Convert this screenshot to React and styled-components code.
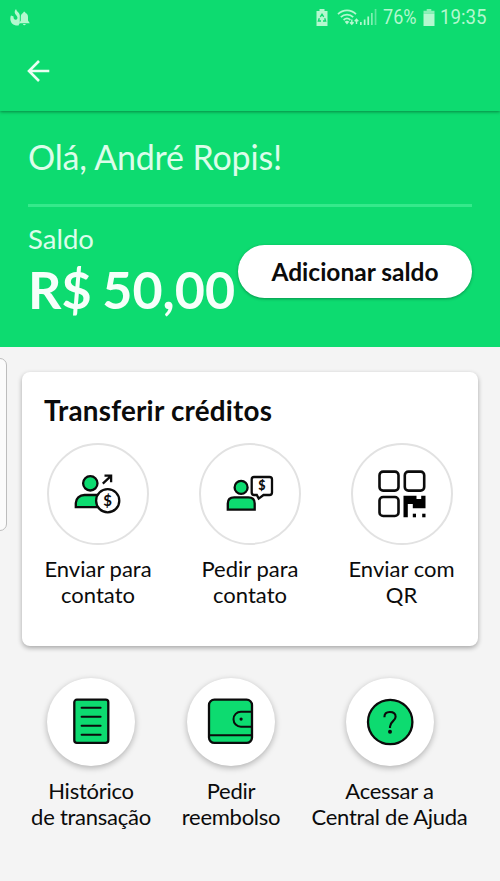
import React from 'react';
import styled, { createGlobalStyle } from 'styled-components';

const GREEN = '#0ddb70';

const GlobalStyle = createGlobalStyle`
  * {
    box-sizing: border-box;
  }

  body {
    margin: 0;
    background-color: #f4f4f4;
  }
`;

// Styled Components
const Screen = styled.div`
  position: relative;
  display: flex;
  flex-direction: column;
  width: 500px;
  height: 881px;
  overflow: hidden;
  background-color: #f4f4f4;
  color: #0b0b0b;
  font-family: Lato, 'Open Sans', sans-serif;
`;

const TopArea = styled.header`
  position: relative;
  flex: none;
  height: 111px;
  background-color: ${GREEN};
  box-shadow: 0 1px 3px rgba(0, 70, 30, 0.55);
`;

const StatusBar = styled.div`
  display: flex;
  align-items: center;
  justify-content: space-between;
  height: 34px;
  padding: 0 13px 0 10px;
  color: #b4f8cf;
`;

const StatusGroup = styled.div`
  display: flex;
  align-items: center;
`;

const StatusItem = styled.div`
  display: flex;
  margin-left: ${props => props.$gap || 0}px;
`;

const StatusText = styled.span`
  width: ${props => props.$width}px;
  font-family: Roboto, sans-serif;
  font-size: 21px;
  line-height: 24px;
  white-space: nowrap;

  span {
    display: inline-block;
    transform: scaleX(${props => props.$squeeze});
    transform-origin: left center;
  }
`;

const BackButton = styled.button`
  display: flex;
  margin: 25px 0 0 26px;
  padding: 0;
  border: 0;
  background: none;
  color: #e9fff2;
`;

const Hero = styled.section`
  flex: none;
  height: 236px;
  padding: 25px 28px 0;
  background-color: ${GREEN};
`;

const Greeting = styled.h1`
  margin: 0;
  height: 68px;
  color: #dcfdea;
  font-size: 34px;
  font-weight: 400;
  line-height: 41px;
  letter-spacing: -0.18px;
  white-space: nowrap;
`;

const Divider = styled.div`
  height: 3px;
  background-color: #35e98b;
`;

const BalanceRow = styled.div`
  display: flex;
  justify-content: space-between;
  padding-top: 15px;
`;

const BalanceLabel = styled.div`
  color: #dcfdea;
  font-size: 27.5px;
  line-height: 34px;
`;

const BalanceValue = styled.div`
  width: 208px;
  margin-top: 1px;
  color: #f6fffa;
  font-size: 52px;
  font-weight: 700;
  line-height: 64px;
  word-spacing: -2px;
  white-space: nowrap;
`;

const AddButton = styled.button`
  flex: none;
  width: 234px;
  height: 53px;
  margin-top: 23px;
  padding: 0;
  border: 0;
  border-radius: 27px;
  background-color: #ffffff;
  box-shadow: 0 1px 3px rgba(0, 60, 30, 0.45);
  color: #0b0b0b;
  font-family: inherit;
  font-size: 24.5px;
  font-weight: 700;
`;

const Card = styled.section`
  flex: none;
  height: 274px;
  margin: 25px 22px 0;
  padding-top: 22px;
  border-radius: 8px;
  background-color: #ffffff;
  box-shadow: 0 2px 5px rgba(0, 0, 0, 0.32);
`;

const CardTitle = styled.h2`
  margin: 0 0 15px 22px;
  font-size: 27.8px;
  font-weight: 700;
  line-height: 34px;
  letter-spacing: 0.22px;
`;

const TransferGrid = styled.div`
  display: grid;
  grid-template-columns: 152px 152px 151px;
`;

const ShortcutRow = styled.div`
  display: grid;
  grid-template-columns: 140px 140px 177px;
  padding: 32px 0 0 21px;
`;

const Action = styled.div`
  display: flex;
  flex-direction: column;
  align-items: center;
  text-align: center;
`;

const OutlineCircle = styled.div`
  display: flex;
  align-items: center;
  justify-content: center;
  width: 102px;
  height: 102px;
  border: 2px solid #e2e2e2;
  border-radius: 50%;
`;

const RaisedCircle = styled.div`
  display: flex;
  align-items: center;
  justify-content: center;
  width: 88px;
  height: 88px;
  border-radius: 50%;
  background-color: #ffffff;
  box-shadow: 0 2px 6px rgba(0, 0, 0, 0.28);
`;

const ActionLabel = styled.div`
  margin-top: ${props => props.$gap}px;
  font-size: 22px;
  line-height: 26px;
  letter-spacing: ${props => props.$spacing || 0}px;
  white-space: pre-line;
`;

// Edge panel handle, floats over the page
const EdgeHandle = styled.div`
  position: absolute;
  top: 358px;
  left: -10px;
  width: 17px;
  height: 173px;
  border: 1px solid #bdbdbd;
  border-radius: 7px;
  background-color: #fbfbfb;
`;

// Icons
const Icon = ({ children }) => (
  <svg width="50" height="50" viewBox="0 0 50 50" fill="none" stroke="#0b0b0b" strokeWidth="2.3">
    {children}
  </svg>
);

const SendIcon = () => (
  <Icon>
    <circle cx="17.3" cy="14.3" r="7.2" fill={GREEN} />
    <path d="M27 26H11.5C6.5 26 2.8 29.5 2.8 34V38.2H27Z" fill={GREEN} />
    <circle cx="34.7" cy="31.7" r="11.6" fill="#ffffff" />
    <path d="M29.8 14.6L38 6.8M31.5 6.7H38.1V13.2" />
    <text x="34.5" y="37" textAnchor="middle" fontFamily="Lato, sans-serif" fontSize="15" fontWeight="700" fill="#0b0b0b" stroke="none">$</text>
  </Icon>
);

const RequestIcon = () => (
  <Icon>
    <circle cx="16.1" cy="18.4" r="6.5" fill={GREEN} />
    <path d="M2.8 40.7V34.5Q2.8 28.3 9.2 28.3H23.3Q29.7 28.3 29.7 34.5V40.7Z" fill={GREEN} />
    <path d="M29 8H44.5Q47 8 47 10.5V23.5Q47 26 44.5 26H38.5L33.7 29.6L31.8 26H29.2Q26.7 26 26.7 23.5V10.5Q26.7 8 29 8Z" fill="#ffffff" />
    <text x="36.8" y="21.2" textAnchor="middle" fontFamily="Lato, sans-serif" fontSize="12.5" fontWeight="900" fill="#0b0b0b" stroke="none">$</text>
  </Icon>
);

const QrIcon = () => (
  <Icon>
    <g strokeWidth="2.6">
      <rect x="2.5" y="2.6" width="19" height="19" rx="3.6" />
      <rect x="27.8" y="2.6" width="19.4" height="19" rx="3.6" />
      <rect x="2.5" y="28" width="19" height="19" rx="3.6" />
    </g>
    <g fill="#000000" stroke="none">
      <path d="M26.5 26.7H39.5V30H44.2V26.7H48.5V39.3H35.8V35H30.8V48.3H26.5Z" />
      <rect x="35.8" y="44.7" width="3.2" height="3.6" />
      <rect x="45.2" y="44.7" width="3.3" height="3.6" />
    </g>
  </Icon>
);

const HistoryIcon = () => (
  <Icon>
    <rect x="8.3" y="2.7" width="34" height="43.2" rx="2.6" fill={GREEN} />
    <path d="M15.6 10.7H34.6M15.6 19.7H34.6M15.6 28.7H34.6M15.6 37.7H34.6" strokeWidth="2" strokeLinecap="round" />
  </Icon>
);

const WalletIcon = () => (
  <Icon>
    <rect x="3" y="2.7" width="43" height="43.2" rx="5.4" fill={GREEN} />
    <path d="M3 38.3H46M46 14.7H34.9A7.4 7.5 0 0 0 34.9 29.7H46" strokeWidth="2" />
    <circle cx="35.1" cy="22.1" r="1.6" fill="#0b0b0b" stroke="none" />
  </Icon>
);

const HelpIcon = () => (
  <Icon>
    <circle cx="25.2" cy="25" r="22.2" fill={GREEN} />
    <path d="M19.4 20.2C19.4 16.7 21.5 15 24.8 15C28.2 15 30.6 16.7 30.6 19.8C30.6 24.3 25 24.1 25 29.8V31" strokeWidth="2.1" />
    <circle cx="25" cy="34.8" r="2" fill="#0b0b0b" stroke="none" />
  </Icon>
);

const NotificationIcons = () => (
  <svg width="20" height="17" viewBox="0 0 20 17" fill="currentColor">
    <path d="M6 0C4 2.2 4.5 4.5 6 6C7.6 7.8 8 9.5 6.6 10.5C4.8 11.5 3.2 9.8 3.6 7.6L1 6.5C-.4 9 0 16 6 16.4H8.6C8.8 15.5 9.4 15 9.8 14V8C10 6 9.6 4.7 8.4 3.4C7.4 2.4 6.4 1.6 6 0Z" />
    <path d="M14.3 2.8C15 2.8 15.4 3.3 15.4 4C17.2 4.6 18 6 18 8V11.5L19.8 14.2H9.2L10.8 11.5V8C10.8 6 11.6 4.6 13.2 4C13.2 3.3 13.6 2.8 14.3 2.8ZM12.8 15H15.9Q14.3 17.4 12.8 15Z" />
  </svg>
);

const BatterySaverIcon = () => (
  <svg width="12" height="17" viewBox="0 0 12 17">
    <path d="M3.5 0H8.5V2H11.5V17H.5V2H3.5Z" fill="currentColor" />
    <path d="M4.3 7.8L6 5.2L7.7 7.8M8.7 9.2L9.6 12H7M5 12H2.4L3.3 9.2" stroke={GREEN} strokeWidth="1.4" fill="none" />
  </svg>
);

const WifiIcon = () => (
  <svg width="23" height="17" viewBox="0 0 23 17" fill="none" stroke="currentColor" strokeWidth="1.7">
    <path d="M1 5.2C6 .2 14 .2 19 5.2M3.8 8.2C7.3 4.7 12.7 4.7 16.2 8.2M6.6 11C8.6 9.2 11.4 9.2 13.4 11" />
    <path d="M7.7 12.8Q10 10.8 12.3 12.8L10 15.4Z" fill="currentColor" stroke="none" />
    <path d="M14.8 10.5V15M13 13.2L14.8 15.2L16.6 13.2M19.5 15V10.5M17.7 12.2L19.5 10.2L21.3 12.2" strokeWidth="1.4" />
  </svg>
);

const SignalIcon = () => (
  <svg width="17" height="16" viewBox="0 0 17 16" fill="currentColor">
    <rect x="0" y="13" width="1.7" height="3" />
    <rect x="3.8" y="10.5" width="1.7" height="5.5" />
    <rect x="7.4" y="7.5" width="1.7" height="8.5" />
    <rect x="11" y="4" width="1.7" height="12" opacity="0.7" />
    <rect x="14.7" y="0" width="1.7" height="16" opacity="0.5" />
  </svg>
);

const BatteryIcon = () => (
  <svg width="12" height="17" viewBox="0 0 12 17" fill="currentColor">
    <path d="M3.7 0H8.3V1.7H11.5V4.5H.5V1.7H3.7Z" opacity="0.75" />
    <path d="M.5 4.5H11.5V17H.5Z" />
  </svg>
);

const BackArrow = () => (
  <svg width="24" height="24" viewBox="0 0 24 24" fill="none" stroke="currentColor" strokeWidth="2.6">
    <path d="M23.3 12H3M13 2L3 12L13 22" />
  </svg>
);

const transfers = [
  { label: 'Enviar para\ncontato', icon: SendIcon },
  { label: 'Pedir para\ncontato', icon: RequestIcon },
  { label: 'Enviar com\nQR', icon: QrIcon },
];

const shortcuts = [
  { label: 'Histórico\nde transação', icon: HistoryIcon },
  { label: 'Pedir\nreembolso', icon: WalletIcon },
  { label: 'Acessar a\nCentral de Ajuda', icon: HelpIcon },
];

const App = () => (
  <Screen>
    <GlobalStyle />

    <TopArea>
      <StatusBar>
        <NotificationIcons />
        <StatusGroup>
          <StatusItem><BatterySaverIcon /></StatusItem>
          <StatusItem $gap={9}><WifiIcon /></StatusItem>
          <StatusItem><SignalIcon /></StatusItem>
          <StatusItem $gap={6}>
            <StatusText $width={40} $squeeze={0.86}><span>76%</span></StatusText>
          </StatusItem>
          <StatusItem><BatteryIcon /></StatusItem>
          <StatusItem $gap={5}>
            <StatusText $width={47} $squeeze={0.89}><span>19:35</span></StatusText>
          </StatusItem>
        </StatusGroup>
      </StatusBar>
      <BackButton aria-label="Voltar">
        <BackArrow />
      </BackButton>
    </TopArea>

    <Hero>
      <Greeting>Olá, André Ropis!</Greeting>
      <Divider />
      <BalanceRow>
        <div>
          <BalanceLabel>Saldo</BalanceLabel>
          <BalanceValue>R$ 50,00</BalanceValue>
        </div>
        <AddButton>Adicionar saldo</AddButton>
      </BalanceRow>
    </Hero>

    <Card>
      <CardTitle>Transferir créditos</CardTitle>
      <TransferGrid>
        {transfers.map(({ label, icon: ActionIcon }) => (
          <Action key={label}>
            <OutlineCircle><ActionIcon /></OutlineCircle>
            <ActionLabel $gap={11}>{label}</ActionLabel>
          </Action>
        ))}
      </TransferGrid>
    </Card>

    <ShortcutRow>
      {shortcuts.map(({ label, icon: ActionIcon }) => (
        <Action key={label}>
          <RaisedCircle><ActionIcon /></RaisedCircle>
          <ActionLabel $gap={12} $spacing={-0.26}>{label}</ActionLabel>
        </Action>
      ))}
    </ShortcutRow>

    <EdgeHandle />
  </Screen>
);

export default App;
